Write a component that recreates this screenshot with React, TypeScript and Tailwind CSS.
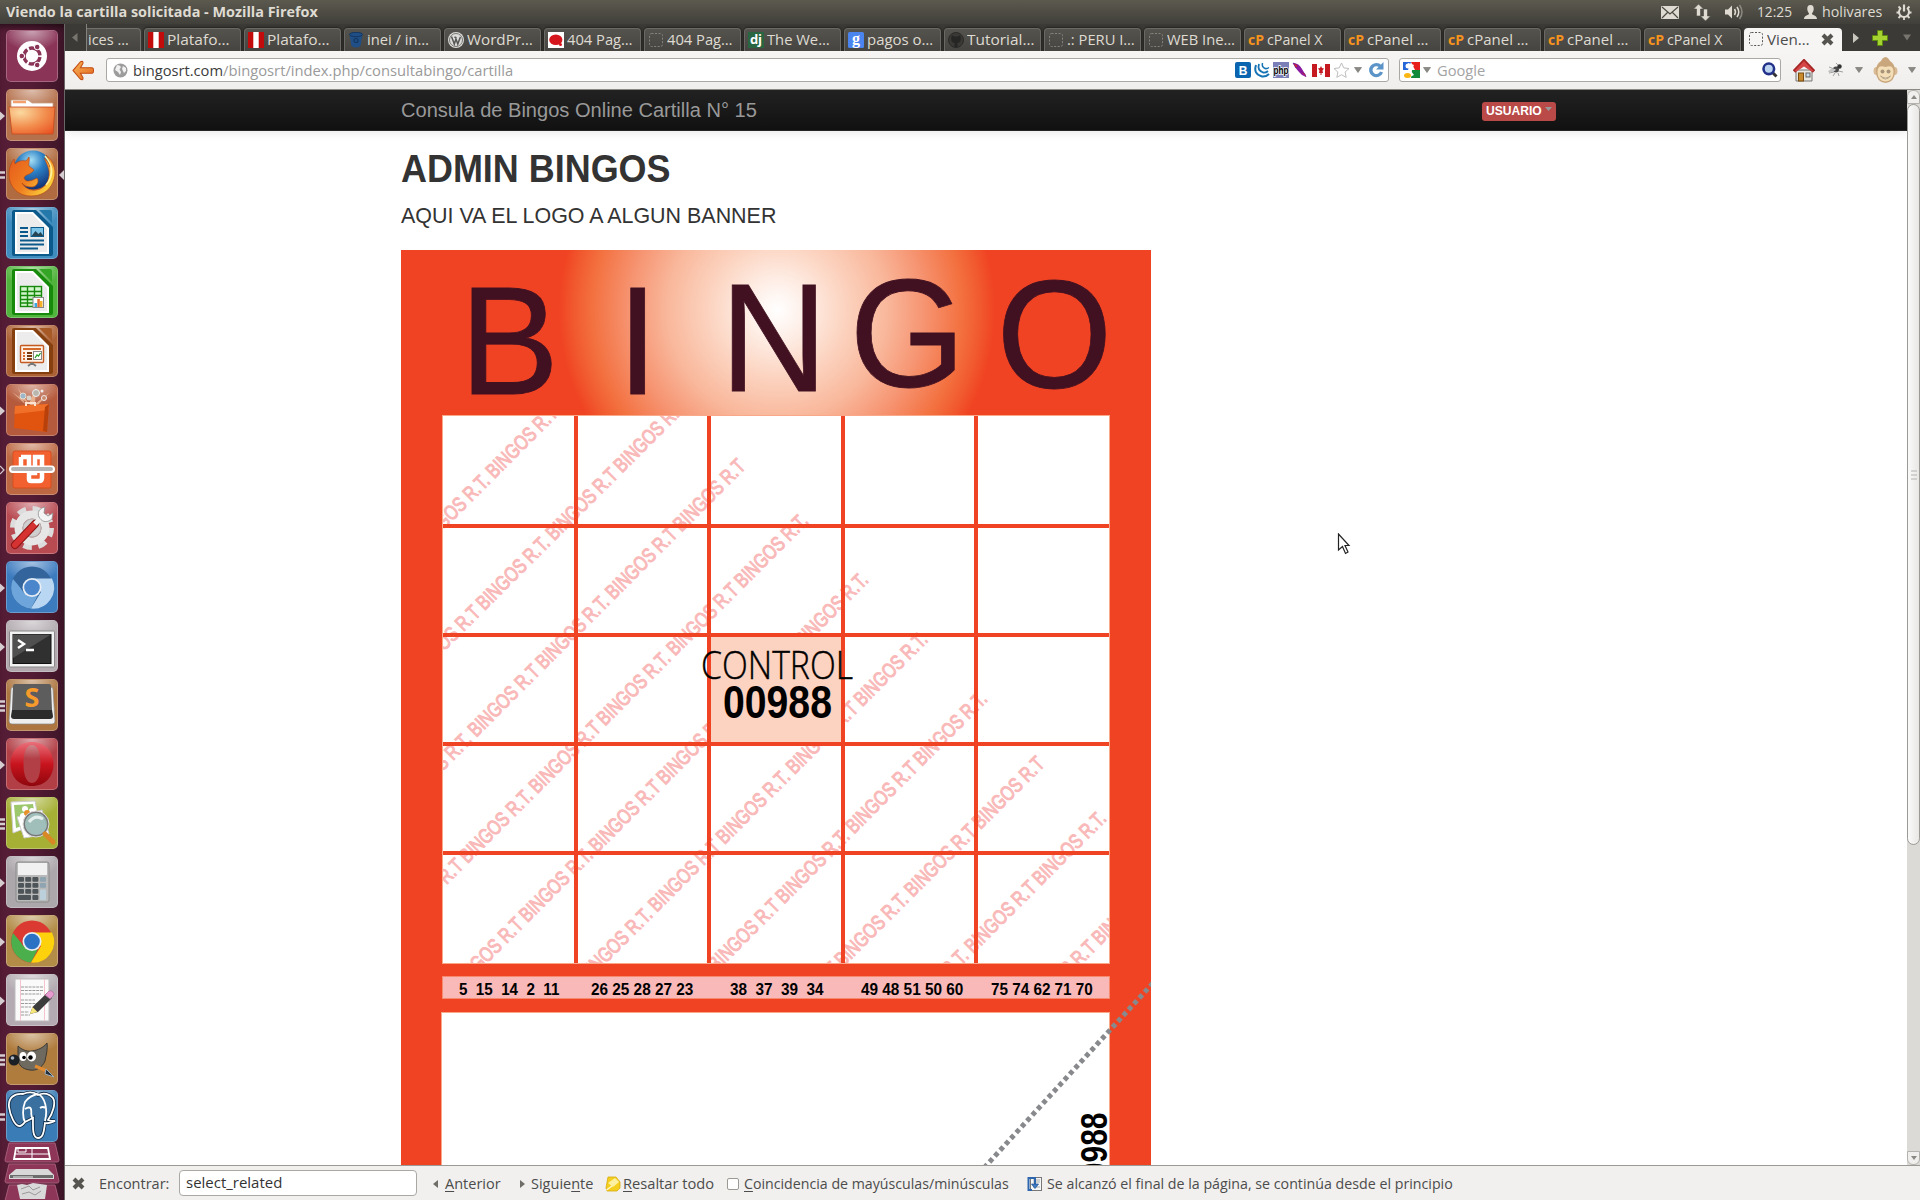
import React, { useLayoutEffect, useRef, useState } from "react";
import type { ReactNode } from "react";

/** Text squeezed or stretched horizontally to a given width. */
function Fit({ w, className = "", children }: { w: number; className?: string; children: ReactNode }) {
  const ref = useRef<HTMLSpanElement>(null);
  const [scale, setScale] = useState(1);
  useLayoutEffect(() => {
    if (ref.current && ref.current.offsetWidth > 0) setScale(w / ref.current.offsetWidth);
  }, [w]);
  return (
    <span className={`inline-block shrink-0 ${className}`} style={{ width: w }}>
      <span ref={ref} className="inline-block origin-left whitespace-pre" style={{ transform: `scaleX(${scale})` }}>
        {children}
      </span>
    </span>
  );
}

/* ---------- top panel ---------- */

function TopPanel() {
  return (
    <header className="flex h-6 shrink-0 items-center bg-linear-to-b from-[#5c5a4f] to-[#403f3a] text-[14.5px] leading-6 text-[#dfdbd2]">
      <Fit w={312} className="ml-1.5 font-bold">Viendo la cartilla solicitada - Mozilla Firefox</Fit>
      <svg className="ml-auto" width="18" height="13" viewBox="0 0 18 13">
        <rect width="18" height="13" rx="1" fill="#dfdbd2" />
        <path d="M1 1l8 7 8-7M1 12l6-6M17 12l-6-6" stroke="#4b4a43" strokeWidth="1.2" fill="none" />
      </svg>
      <svg className="ml-3.5" width="18" height="17" viewBox="0 0 18 17">
        <path d="M5.500 0L0.500 5h3v7h4V5h3zM12.500 17l5-5h-3V5h-4v7h-3z" fill="#dfdbd2" stroke="#4b4a43" strokeWidth=".6" />
      </svg>
      <svg className="ml-3.5" width="19" height="16" viewBox="0 0 19 16">
        <path d="M0 5.500h3l4-4v13l-4-4H0z" fill="#dfdbd2" />
        <path d="M9.500 5q2 3 0 6M12 3q3.500 5 0 10" stroke="#dfdbd2" strokeWidth="1.500" fill="none" />
        <path d="M14.500 1q5 7 0 14" stroke="#8b8980" strokeWidth="1.500" fill="none" />
      </svg>
      <Fit w={35} className="ml-[13px]">12:25</Fit>
      <svg className="ml-3" width="13" height="14" viewBox="0 0 13 14">
        <path d="M6.500 0C4 0 3 2 3.300 4.500 3.500 7 5 7.500 5 9c0 1-5 1-5 5h13c0-4-5-4-5-5 0-1.500 1.500-2 1.700-4.500C10 2 9 0 6.500 0z" fill="#dfdbd2" />
      </svg>
      <Fit w={60} className="ml-[5px]">holivares</Fit>
      <svg className="ml-3.5 mr-2" width="16" height="16" viewBox="0 0 16 16" fill="none" stroke="#dfdbd2">
        <path d="M5 4a5 5 0 1 0 6 0" strokeWidth="2" />
        <path d="M8 .5v7" strokeWidth="2.200" />
        <path d="M2.500 2.500l2 2M13.500 2.500l-2 2M.5 8.500H3M13 8.500h2.500M2.500 14l2-2M13.500 14l-2-2M8 13v3" strokeWidth="1.800" />
      </svg>
    </header>
  );
}

/* ---------- launcher ---------- */

function Pips({ kind }: { kind: string }) {
  return (
    <svg className="absolute -left-[7px] top-5 h-3 w-1.5" viewBox="0 0 6 12">
      {kind === "one" && <path d="M0 1.500L5 6 0 10.500z" fill="#d6cdd1" />}
      {kind === "hollow" && <path d="M0 2L4 6 0 10" fill="none" stroke="#d6cdd1" strokeWidth="1.200" />}
      {kind === "two" && <path d="M0 3.500h5M0 8.500h5" stroke="#d6cdd1" strokeWidth="2.400" />}
      {kind === "three" && <path d="M0 1.500h5M0 6h5M0 10.500h5" stroke="#d6cdd1" strokeWidth="2.400" />}
    </svg>
  );
}

function Tile({ bg, pips, active, children }: { bg: string; pips?: string; active?: boolean; children: ReactNode }) {
  return (
    <div className={`relative ml-1.5 size-13 shrink-0 rounded-[5px] border border-white/25 ${bg}`}>
      <div className="absolute inset-0 rounded-[5px] bg-[radial-gradient(ellipse_60%_40%_at_50%_0%,rgba(255,255,255,0.55),transparent)]" />
      <svg className="absolute -left-px -top-px size-13" viewBox="0 0 52 52">{children}</svg>
      {pips && <Pips kind={pips} />}
      {active && (
        <svg className="absolute -right-[7px] top-5 h-3 w-[5px]" viewBox="0 0 5 10">
          <path d="M5 0v10L0 5z" fill="#d6cdd1" />
        </svg>
      )}
    </div>
  );
}

function OfficeDoc({ dark, fold, children }: { dark: string; fold: string; children: ReactNode }) {
  return (
    <g>
      <path d="M8 3h22l17 17v27q0 2-2 2H8q-2 0-2-2V5q0-2 2-2z" fill={dark} />
      <path d="M33 3h11q2 0 2 2v11z" fill={fold} />
      <path d="M9 5h18l16 16v26H9z" fill="#fff" />
      <path d="M11 7h15l15 15v23H11z" fill="#ececec" />
      {children}
    </g>
  );
}

function ChromeMark({ a, b, c, mid }: { a: string; b: string; c: string; mid: string }) {
  return (
    <g>
      <circle cx="26" cy="26.500" r="21" fill={a} />
      <path d="M7 18A21 21 0 0 0 25 47.500L33.500 31 18 31z" fill={b} />
      <path d="M46 17.500H27L35 31 25 47.500A21 21 0 0 0 46 17.500z" fill={c} />
      <path d="M8 16l9.500 15.500L26 20z" fill={a} />
      <circle cx="26" cy="26.500" r="9.500" fill="#e8eef4" />
      <circle cx="26" cy="26.500" r="7.800" fill={mid} />
    </g>
  );
}

function Launcher() {
  return (
    <aside className="flex w-[65px] shrink-0 flex-col gap-[7px] overflow-hidden border-r border-[#6b6668] bg-linear-to-r from-[#561d36] via-[#531c34] to-[#3f1528] pt-1.5 shadow-[inset_0_6px_6px_-3px_rgba(0,0,0,0.5)]">
      <Tile bg="bg-[#8a3457]">
        <circle cx="26" cy="26" r="15" fill="#fff" />
        <circle cx="26" cy="26" r="8" fill="none" stroke="#8a3457" strokeWidth="3.400" strokeDasharray="14.700 2.050" strokeDashoffset="-1" />
        <circle cx="15.800" cy="26" r="2.800" fill="#8a3457" stroke="#fff" />
        <circle cx="31.200" cy="17" r="2.800" fill="#8a3457" stroke="#fff" />
        <circle cx="31.200" cy="35" r="2.800" fill="#8a3457" stroke="#fff" />
      </Tile>
      <Tile bg="bg-[#b5714c]" pips="one">
        <path d="M5 11h17l4 3h21v8H5z" fill="#fff" stroke="#c9a083" strokeWidth=".8" />
        <path d="M7 13h13" stroke="#f3a06d" strokeWidth="2.500" />
        <defs>
          <radialGradient id="folder" cx=".25" cy=".2" r="1"><stop offset="0" stopColor="#fbd9a0" /><stop offset=".55" stopColor="#f28e4e" /><stop offset="1" stopColor="#ea5423" /></radialGradient>
        </defs>
        <path d="M3 18h46l-2 27H6z" fill="url(#folder)" stroke="#c54a1c" strokeWidth=".8" />
      </Tile>
      <Tile bg="bg-[#b06c40]" pips="two" active>
        <defs>
          <radialGradient id="globe" cx=".45" cy=".25" r=".8"><stop offset="0" stopColor="#a8e0f5" /><stop offset=".4" stopColor="#2c7fc4" /><stop offset="1" stopColor="#10296d" /></radialGradient>
          <linearGradient id="fox" x1="0" y1="0" x2="1" y2=".6"><stop offset="0" stopColor="#e5591d" /><stop offset=".55" stopColor="#ef7d1f" /><stop offset="1" stopColor="#fbd13c" /></linearGradient>
        </defs>
        <circle cx="27" cy="22" r="19.500" fill="url(#globe)" />
        <path d="M40 7c9 7 11 18 7 27-4 10-13 14-22 14C12 48 3 39 3 26 3 19 6 14 8 11l1 5c3-3 7-4 11-3l3-4c1 4-1 7 0 9l5 4c-3 5-9 4-10 8 2 5 7 3 13 0 3 4-1 9-5 9-5 0-8-1-10-4 3 5 8 8 14 7 9-1 14-9 13-19-1-5-3-9-5-13 3 2 5 5 6 9 0-5-2-9-4-12z" fill="url(#fox)" stroke="#b64213" strokeWidth=".6" />
        <path d="M39 8c6 7 9 16 4 25M45 18c1 8 0 14-5 19" fill="none" stroke="#fff09a" strokeWidth="1.600" />
      </Tile>
      <Tile bg="bg-[#3f8cbf]">
        <OfficeDoc dark="#0c5a8c" fold="#2478aa">
          <path d="M14 21h8M14 25h8M14 29h8M14 33.500h24M14 37.500h24M14 41.500h18" stroke="#0c5a8c" strokeWidth="2" />
          <rect x="25" y="20.500" width="12.500" height="9" fill="#7cc4e8" stroke="#0c5a8c" />
          <path d="M25.500 29l4-5 3 3 2-2 3 4z" fill="#274452" />
        </OfficeDoc>
      </Tile>
      <Tile bg="bg-[#51b43c]">
        <OfficeDoc dark="#178a0c" fold="#35a526">
          <rect x="14.500" y="20.500" width="21" height="20" fill="#d2f5cb" stroke="#178a0c" strokeWidth="1.400" />
          <path d="M14 25.500h22M14 29.500h22M14 33.500h22M14 37h22M21.500 20v21M28.500 20v21" stroke="#178a0c" strokeWidth="1.400" />
          <rect x="27" y="31.500" width="10.500" height="10" fill="#fff" stroke="#888" />
          <path d="M28.500 37h2.500v4h-2.500z" fill="#3aa7e0" /><path d="M31.300 33h2.500v8h-2.500z" fill="#e8692a" /><path d="M34 35h2.500v6H34z" fill="#f4b32a" />
        </OfficeDoc>
      </Tile>
      <Tile bg="bg-[#ad6236]">
        <OfficeDoc dark="#86400f" fold="#a85a26">
          <rect x="14.500" y="20.500" width="23" height="17" rx="1" fill="#fff3e8" stroke="#c45a20" strokeWidth="1.400" />
          <path d="M17 24h18" stroke="#d66a2a" strokeWidth="2" />
          <path d="M17 28h2M17 31h2M17 34h2" stroke="#d66a2a" strokeWidth="1.800" />
          <path d="M21 28h5M21 31h5M21 34h5" stroke="#7c3a10" strokeWidth="1.800" />
          <rect x="27.500" y="26.500" width="8" height="8" fill="#fff" stroke="#888" /><path d="M29 33l2-3 1.500 1 2-3" stroke="#2ba32b" fill="none" strokeWidth="1.300" />
          <path d="M22 41l4-3 4 3M26 38v2" stroke="#777" strokeWidth="1.800" fill="none" />
        </OfficeDoc>
      </Tile>
      <Tile bg="bg-[#b55a3c]" pips="one">
        <path d="M26 22L6 8l13 12L12 4l11 16L30 3l-1 17L44 8 31 22z" fill="#f8c9a2" opacity=".7" />
        <circle cx="17" cy="12" r="3" fill="#9cb7c8" stroke="#e4dcd4" /><circle cx="30" cy="9" r="3.500" fill="#b9b6ae" stroke="#eee" /><circle cx="23" cy="14" r="2.500" fill="#d9d2c8" /><circle cx="38" cy="14" r="2.500" fill="#c98b6c" stroke="#eee" /><circle cx="36" cy="7" r="1.500" fill="#eee" />
        <path d="M9 22l34-2-2 28-33-4z" fill="#e0540f" /><path d="M9 22l34-2-.3 6L8.500 30z" fill="#f0702a" /><path d="M41 48l2-28-4 3-2 24z" fill="#b8400a" />
        <path d="M20 22v-3h9v3" stroke="#fbe3cf" strokeWidth="2" fill="none" />
      </Tile>
      <Tile bg="bg-[#bd6842]" pips="hollow">
        <rect x="7" y="8" width="38" height="37" rx="2" fill="#f2602f" stroke="#d94c1e" />
        <path d="M15 14h8v22q0 2 2 2h8q3 0 3-3V14h-7v16h-4" fill="none" stroke="#fff" strokeWidth="4.500" />
        <path d="M15 14v16" stroke="#fff" strokeWidth="4.500" />
        <rect x="3" y="22.500" width="46" height="7.500" rx="3.700" fill="#fff" /><rect x="5" y="24" width="42" height="4" rx="2" fill="#b5b5b5" />
      </Tile>
      <Tile bg="bg-[#b84a52]">
        <circle cx="26" cy="26" r="18" fill="none" stroke="#dcdcdc" strokeWidth="8" strokeDasharray="8 6.140" />
        <circle cx="26" cy="26" r="13.500" fill="none" stroke="#e6e6e6" strokeWidth="8" /><circle cx="26" cy="26" r="9" fill="#cfcfcf" stroke="#b5b5b5" />
        <path d="M9 43L29 22" stroke="#8f1414" strokeWidth="8" strokeLinecap="round" /><path d="M9 43L28 23" stroke="#d63232" strokeWidth="6" strokeLinecap="round" />
        <path d="M29 22l7-7" stroke="#eee" strokeWidth="5" /><path d="M39 5c-6 1-8 6-6 10s7 7 13 2l1-6-5 3-4-3z" fill="#f4f4f4" stroke="#8d8d8d" strokeWidth=".8" />
      </Tile>
      <Tile bg="bg-[#3d7bbf]" pips="one"><ChromeMark a="#33659c" b="#6ea6dc" c="#b9d6f2" mid="#4b86cc" /></Tile>
      <Tile bg="bg-[#b1a9ae]" pips="one">
        <rect x="3.500" y="11" width="45" height="36" rx="1" fill="#f2f2f2" stroke="#888" /><rect x="7" y="14.500" width="38" height="29" fill="#303030" stroke="#111" />
        <path d="M7 14.500h38L7 38z" fill="#505050" />
        <path d="M12 20l6 4-6 4M20 30h8" stroke="#fff" strokeWidth="2.400" fill="none" />
      </Tile>
      <Tile bg="bg-[#ad7640]" pips="three">
        <path d="M5 10q0-2 3-2h36q3 0 3 2l2 32q0 3-3 3H6q-3 0-3-3z" fill="#eee" stroke="#888" strokeWidth=".7" />
        <path d="M9 5h34q2 0 2 2l1 24H6L7 7q0-2 2-2z" fill="#5d5d5d" /><path d="M6 31h40l1 6q0 3-3 3H8q-3 0-3-3z" fill="#2b2b2b" />
        <text x="26" y="28" textAnchor="middle" fontSize="27" fontWeight="700" fill="#f79a2c" fontFamily="Open Sans, sans-serif">S</text>
      </Tile>
      <Tile bg="bg-[#b23e46]" pips="one">
        <defs><linearGradient id="opera" x1="0" y1="0" x2="0" y2="1"><stop offset="0" stopColor="#e9707a" /><stop offset=".5" stopColor="#c8141e" /><stop offset="1" stopColor="#8f060c" /></linearGradient></defs>
        <path fillRule="evenodd" d="M26 4C13 4 4.500 13 4.500 26S13 48 26 48s21.500-9 21.500-22S39 4 26 4zm0 3c6 0 8.500 8 8.500 18.500S32 45 26 45s-8.500-9-8.500-19.500S20 7 26 7z" fill="url(#opera)" />
      </Tile>
      <Tile bg="bg-[#a5b034]" pips="three">
        <path d="M5 5l24-1 4 22-26 10z" fill="#fff" stroke="#ccc" /><path d="M8 8l19-1 3 17-20 7z" fill="#9cc76c" /><path d="M11 20l25-7 7 24-25 4z" fill="#fff" stroke="#ccc" />
        <g fill="#fff"><circle cx="19" cy="12" r="3" /><circle cx="26" cy="14" r="3" /><circle cx="17" cy="19" r="3" /><circle cx="24" cy="20" r="3" /></g><circle cx="21" cy="16" r="3" fill="#e8922a" />
        <circle cx="30" cy="27" r="12" fill="#8fb3ae" fillOpacity=".85" stroke="#777" strokeWidth="2" /><circle cx="30" cy="27" r="13" fill="none" stroke="#ddd" />
        <path d="M23 25q6-8 14-3" stroke="#e4efed" strokeWidth="3" fill="none" /><path d="M39 37l8 8" stroke="#d88926" strokeWidth="5" strokeLinecap="round" />
      </Tile>
      <Tile bg="bg-[#aca7ab]" pips="one">
        <rect x="10" y="6" width="33" height="40" rx="2" fill="#b9b9b9" stroke="#8b8b8b" /><rect x="12" y="7" width="29" height="12" fill="#f1f1f1" />
        <g fill="#4e5458">{[21, 27, 33].map((y) => [12, 19.2, 26.400].map((x) => <rect key={`${x}-${y}`} x={x} y={y} width="6" height="4.800" rx="1" />))}<rect x="12" y="39" width="13" height="5" rx="1" /><rect x="26.400" y="39" width="6" height="5" rx="1" /></g>
        <g fill="#8ea4b1"><rect x="34" y="21" width="6" height="4.800" rx="1" /><rect x="34" y="27" width="6" height="4.800" rx="1" /><rect x="34" y="33.500" width="6" height="10.500" rx="1" fill="#bcd0dc" /></g>
      </Tile>
      <Tile bg="bg-[#b38c48]" pips="one"><ChromeMark a="#db3a33" b="#4bb04c" c="#fdd20d" mid="#2b72c4" /></Tile>
      <Tile bg="bg-[#b3abb1]" pips="one">
        <rect x="9" y="5" width="34" height="42" fill="#fafafa" stroke="#bbb" /><path d="M14.500 5v42M38.500 5v42" stroke="#f2b8c4" strokeWidth=".8" />
        <path d="M15 13h22M15 16.500h22M15 20h20M15 26h14M15 29.500h16M15 33h10M15 38h8M15 41h9" stroke="#9a9a9a" strokeDasharray="3 .8" />
        <path d="M24 40l2.500-7L41 19l5 5-14 14z" fill="#3c3c3c" /><path d="M24 40l2.500-7 5 5z" fill="#f6e57a" /><path d="M39 21l4-4q2-1 4 1t0 4l-3 3z" fill="#e99ad0" stroke="#9c6b8e" strokeWidth=".6" />
      </Tile>
      <Tile bg="bg-[#b07c3e]" pips="three">
        <path d="M12 13c3 3 8 6 14 5 6-1 11-3 15-8 1 5-1 13-2 18-3 7-9 10-15 9-8-1-12-5-12-12z" fill="#6f6a60" stroke="#3c3933" />
        <circle cx="8" cy="27" r="5.500" fill="#1c1f24" /><circle cx="6.500" cy="25" r="1.800" fill="#aab5c2" />
        <ellipse cx="17" cy="23.500" rx="3.500" ry="4.500" fill="#fff" /><ellipse cx="25.500" cy="23.500" rx="4.500" ry="5" fill="#fff" /><circle cx="18" cy="24.500" r="1.800" /><circle cx="24.500" cy="24.500" r="2.200" />
        <path d="M29 33l12 5" stroke="#e08a32" strokeWidth="3" /><path d="M40 36l8 8-9-3z" fill="#23303c" stroke="#9ab" />
      </Tile>
      <div className="-mt-0.5 flex flex-col">
        <Tile bg="bg-[#3a7cb5]" pips="two">
          <path d="M17 4C8 3 2 8 3 17c1 8 6 20 11 19 2 0 4-3 5-4l8-4c0 8-1 20 5 20s6-9 7-15c4 1 8-1 10-2-3 0-5 0-7-1 5-7 8-17 5-22-3-4-9-6-15-3-4-3-10-3-15-1z" fill="#3970a0" stroke="#102c48" strokeWidth="3.500" />
          <path d="M17 4C8 3 2 8 3 17c1 8 6 20 11 19 2 0 4-3 5-4l8-4c0 8-1 20 5 20s6-9 7-15c4 1 8-1 10-2-3 0-5 0-7-1 5-7 8-17 5-22-3-4-9-6-15-3-4-3-10-3-15-1zM19 32c-3-5-2-15 0-20 3-4 6-7 13-8M32 4c7 3 10 15 7 27M19 19q5-3 6 0c1 5-1 7 2 10M34 18q3-2 5 0" fill="none" stroke="#fff" strokeWidth="1.800" />
        </Tile>
        <svg className="ml-1" width="56" height="59" viewBox="0 0 56 59">
          <path d="M5 1h46l4 17q0 2-2 2H3q-2 0-2-2z" fill="#8d3658" stroke="#a65b78" /><path d="M12 6h32l2 11H10z" fill="#8d3658" stroke="#fff" strokeWidth="1.800" /><path d="M28 6v11M11 12h34M14 6h8v4h-8z" stroke="#fff" fill="none" />
          <path d="M5 22h46l4 17q0 2-2 2H3q-2 0-2-2z" fill="#8d3658" stroke="#a65b78" /><path d="M12 27h32l6 6v4H5v-4z" fill="#d8d8d8" /><path d="M6 33h43v3H6z" fill="#6b6b6b" /><path d="M9 35h20" stroke="#eee" />
          <path d="M5 43h46l4 16H1z" fill="#8d3658" stroke="#a65b78" /><path d="M13 43l5-1 5 1 6-2 7 1 7 1-2 14H16z" fill="#d9d9d9" /><path d="M17 47l8-3 4 4 7-3M18 52l7-2 6 3 6-4" stroke="#999" fill="none" />
        </svg>
      </div>
    </aside>
  );
}

/* ---------- tab strip ---------- */

type IconKind = "peru" | "bucket" | "wp" | "claro" | "none" | "dj" | "google" | "github" | "cp";

function TabIcon({ kind, light }: { kind: IconKind; light?: boolean }) {
  return (
    <svg className="mb-px size-4 shrink-0" viewBox="0 0 16 16">
      {kind === "peru" && <><rect width="16" height="16" fill="#c20c0c" /><rect x="5.300" width="5.400" height="16" fill="#fff" /></>}
      {kind === "bucket" && <><path d="M1.500 2.500L3.500 14q4.500 3 9 0l2-11.500z" fill="#1f4f86" /><ellipse cx="8" cy="2.500" rx="6.500" ry="2.200" fill="#1f4f86" stroke="#14365e" /><circle cx="8" cy="8.500" r="2" fill="none" stroke="#14365e" strokeWidth="1.200" /></>}
      {kind === "wp" && <><circle cx="8" cy="8" r="8" fill="#dcdcd8" /><circle cx="8" cy="8" r="6.500" fill="none" stroke="#777" /><path d="M3.500 4.500L6.300 12l1.700-5 1.800 5 2.600-7M6.500 5l2 1" stroke="#555" strokeWidth="1.500" fill="none" /></>}
      {kind === "claro" && <><rect width="16" height="16" fill="#fff" /><ellipse cx="7.800" cy="7.800" rx="6.600" ry="5.300" fill="#d5161c" /><circle cx="12.500" cy="12.500" r="1.500" fill="#d5161c" /></>}
      {kind === "none" && <rect x="1.500" y="1.500" width="13" height="13" rx="2" fill="none" stroke={light ? "#555" : "#85837c"} strokeDasharray="2 1.500" />}
      {kind === "dj" && <><rect width="16" height="16" fill="#2a6542" /><text x="8" y="12" fontSize="13" fontWeight="700" fill="#fff" textAnchor="middle" fontFamily="Open Sans, sans-serif">dj</text></>}
      {kind === "google" && <><rect width="16" height="16" rx="1.500" fill="#4a84ee" /><text x="8" y="12" fontSize="16" fontWeight="700" fill="#fff" textAnchor="middle" fontFamily="Liberation Serif, serif">g</text></>}
      {kind === "github" && <><circle cx="8" cy="8" r="7.500" fill="#3a3936" stroke="#2a2a28" /><path d="M4 3l2 1.500h4L12 3q1.500 3 .5 6-1 2-3 2v4h-3v-4q-2 0-3-2-1-3 .5-6z" fill="#262624" /></>}
      {kind === "cp" && <text x="8" y="13" fontSize="14" fontWeight="700" fill="#f7931d" textAnchor="middle" textLength="16" lengthAdjust="spacingAndGlyphs" fontFamily="Open Sans, sans-serif">cP</text>}
    </svg>
  );
}

const TABS: { icon: IconKind; label: string; w: number }[] = [
  { icon: "peru", label: "Platafo…", w: 63 },
  { icon: "peru", label: "Platafo…", w: 63 },
  { icon: "bucket", label: "inei / in…", w: 62 },
  { icon: "wp", label: "WordPr…", w: 66 },
  { icon: "claro", label: "404 Pag…", w: 66 },
  { icon: "none", label: "404 Pag…", w: 66 },
  { icon: "dj", label: "The We…", w: 63 },
  { icon: "google", label: "pagos o…", w: 66 },
  { icon: "github", label: "Tutorial…", w: 67 },
  { icon: "none", label: ".: PERU I…", w: 68 },
  { icon: "none", label: "WEB Ine…", w: 68 },
  { icon: "cp", label: "cPanel X", w: 56 },
  { icon: "cp", label: "cPanel …", w: 61 },
  { icon: "cp", label: "cPanel …", w: 61 },
  { icon: "cp", label: "cPanel …", w: 61 },
  { icon: "cp", label: "cPanel X", w: 56 },
];

function TabStrip() {
  return (
    <div className="flex h-[27px] items-end bg-[#3b3a36] text-[14.5px] leading-[22px] text-[#dfdbd2]">
      <div className="flex h-full w-[22px] items-center border-r border-[#85837c] pl-1.5">
        <svg width="7" height="9" viewBox="0 0 7 9"><path d="M6.500 0v9L1 4.500z" fill="#77756e" /></svg>
      </div>
      <div className="mr-[3px] h-[23px] w-[54px] rounded-tr-[4px] border-r border-t border-[#73716b] bg-linear-to-b from-[#55534e] to-[#454440] pl-px">
        <Fit w={41}>ices …</Fit>
      </div>
      {TABS.map((t, i) => (
        <div key={i} className="mr-[3px] flex h-[23px] w-[97px] shrink-0 items-center rounded-t-[4px] border border-b-0 border-[#6b6963] bg-linear-to-b from-[#55534e] to-[#454440] pl-[3px] shadow-[0_0_2px_1px_rgba(25,25,22,0.7)]">
          <TabIcon kind={t.icon} />
          <Fit w={t.w} className="ml-[3px]">{t.label}</Fit>
        </div>
      ))}
      <div className="flex h-[23px] w-[98px] shrink-0 items-center rounded-t-[4px] bg-[#f6f5f4] pl-1 text-[#4c4c4c]">
        <TabIcon kind="none" light />
        <Fit w={43} className="ml-[3px]">Vien…</Fit>
        <CloseGlyph className="ml-[11px]" />
      </div>
      <div className="flex h-full items-center gap-3 pl-[11px]">
        <svg width="7" height="10" viewBox="0 0 7 10"><path d="M0 0v10l6-5z" fill="#c9c6be" /></svg>
        <svg width="16" height="16" viewBox="0 0 16 16"><path d="M5.500 .5h5v5h5v5h-5v5h-5v-5h-5v-5h5z" fill="#a5d32f" stroke="#5d8a0e" /></svg>
        <svg className="ml-[3px]" width="8" height="7" viewBox="0 0 8 7"><path d="M0 .5h8L4 6.500z" fill="#77756e" /></svg>
      </div>
    </div>
  );
}

function CloseGlyph({ className = "" }: { className?: string }) {
  return (
    <svg className={`shrink-0 ${className}`} width="13" height="13" viewBox="0 0 13 13">
      <path d="M2 2l9 9M11 2l-9 9" stroke="#55544f" strokeWidth="4" />
    </svg>
  );
}

function Caret({ className = "" }: { className?: string }) {
  return <svg className={`shrink-0 ${className}`} width="8" height="6" viewBox="0 0 8 6"><path d="M.5.500h7L4 5.500z" fill="#8b8984" stroke="#6e6d68" strokeWidth=".6" /></svg>;
}

/* ---------- location bar ---------- */

function NavBar() {
  return (
    <div className="flex h-[39px] items-center border-b border-[#8a8984] bg-linear-to-b from-[#f6f5f4] to-[#efeeec] text-[15px] leading-6">
      <svg className="ml-[7px] shrink-0" width="22" height="21" viewBox="0 0 22 19" preserveAspectRatio="none">
        <defs><linearGradient id="back" x1="0" y1="0" x2="1" y2="1"><stop offset="0" stopColor="#f9b45a" /><stop offset="1" stopColor="#e2641c" /></linearGradient></defs>
        <path d="M1 9.500L8.500 1.500q3-1 2.500 1.500L8.500 7H20q1.500 0 1.500 2.500T20 12H8.500l2.500 4q.5 2.500-2.500 1.500z" fill="url(#back)" stroke="#c44c12" />
      </svg>
      <div className="ml-3 flex h-6 w-[1283px] shrink-0 items-center rounded-[3px] border border-[#a9a8a3] bg-white">
        <svg className="ml-1.5 shrink-0" width="15" height="15" viewBox="0 0 15 15">
          <circle cx="7.500" cy="7.500" r="7" fill="#9c9c9c" /><path d="M4 2q3 0 4 2L6.500 6.500 8 9l-1 3-2-3-3-2zM10 3l3 2v3l-2 2-2-4z" fill="#f1f1f1" />
        </svg>
        <Fit w={90} className="ml-[5px] text-[#3c3c3c]">bingosrt.com</Fit>
        <Fit w={290} className="text-[#9a9a9a]">/bingosrt/index.php/consultabingo/cartilla</Fit>
        <div className="ml-auto flex items-center">
          <svg width="16" height="16" viewBox="0 0 16 16"><rect width="16" height="16" rx="2" fill="#0b64b0" /><text x="8" y="12.500" fontSize="12" fontWeight="700" fill="#fff" textAnchor="middle" fontFamily="Liberation Sans, sans-serif">B</text></svg>
          <svg className="ml-[3px]" width="16" height="16" viewBox="0 0 16 16" fill="none" stroke="#1673b4"><path d="M2 3Q-1 12 8 14.500q4 .5 7-2.500" strokeWidth="2" /><path d="M5 2q-2 6 4 8.500 3 .5 5-1.500" strokeWidth="1.800" /><path d="M8.500 1q-1 4 2.500 5.500 2 .5 4-1" strokeWidth="1.500" /></svg>
          <svg className="ml-[3px]" width="16" height="16" viewBox="0 0 16 16"><rect width="16" height="16" fill="#7b7fb8" /><text x="8" y="11.500" fontSize="10" fontWeight="700" textAnchor="middle" textLength="15" lengthAdjust="spacingAndGlyphs" fill="#000" stroke="#fff" strokeWidth="1.500" paintOrder="stroke" fontFamily="Liberation Sans, sans-serif">php</text></svg>
          <svg className="ml-[3px]" width="16" height="16" viewBox="0 0 16 16"><path d="M1 1q6 0 9 6l3 5 1 3q-4-1-7-5Q3 6 1 1z" fill="#8b1aa0" /><path d="M1 1q3 1 5 3L4 6zM9 9l4 3 1 3" fill="#e0222c" stroke="#5b1b9c" strokeWidth=".6" /></svg>
          <svg className="ml-1" width="18" height="13" viewBox="0 0 18 13"><rect width="18" height="13" fill="#c41a20" /><rect x="5" width="8" height="13" fill="#fff" /><path d="M9 2l1 2 2 .5-1.500 2L11 9H9.500v2h-1V9H7l.5-2.500L6 4.500 8 4z" fill="#c41a20" /></svg>
          <svg className="ml-[3px]" width="17" height="16" viewBox="0 0 17 16"><path d="M8.500 1l2.300 4.900 5.200.6-3.900 3.600 1.100 5.300-4.700-2.700-4.700 2.700 1.100-5.300L1 6.500l5.200-.6z" fill="#fff" stroke="#bdbdbd" /></svg>
          <Caret className="ml-1" />
          <svg className="ml-1.5 mr-1" width="16" height="16" viewBox="0 0 16 16"><path d="M12.500 4.500A5.500 5.500 0 1 0 13.500 10" fill="none" stroke="#5c94c8" strokeWidth="3.400" /><path d="M15.500 0v7.500H8z" fill="#5c94c8" /></svg>
        </div>
      </div>
      <div className="ml-2.5 flex h-6 w-[382px] shrink-0 items-center rounded-[3px] border border-[#a9a8a3] bg-white">
        <svg className="ml-[3px]" width="17" height="16" viewBox="0 0 17 16"><path d="M0 0h8L5 8H0z" fill="#2465d8" /><path d="M8 0h9v8h-5z" fill="#e8201b" /><path d="M0 8h7l3 8H0z" fill="#fff" /><path d="M9 8h8v8H8z" fill="#128a3b" /><circle cx="5" cy="4" r="2.500" fill="#fff" /><path d="M5 1l6 2-3 6 3 4-4 2" fill="#fff" /><ellipse cx="4.500" cy="13.500" rx="3.500" ry="2.500" fill="#fbb612" /></svg>
        <Caret className="ml-[3px]" />
        <Fit w={48} className="ml-1.5 text-[#a3a3a3]">Google</Fit>
        <svg className="ml-auto mr-0.5" width="16" height="16" viewBox="0 0 16 16"><path d="M10.500 10.500l4 4" stroke="#333" strokeWidth="3" /><circle cx="6.800" cy="6.800" r="5.300" fill="#bcd4f0" stroke="#22318a" strokeWidth="2.600" /></svg>
      </div>
      <svg className="ml-3 shrink-0" width="22" height="23" viewBox="0 0 22 23"><path d="M3 11h16v11H3z" fill="#e8e6e0" stroke="#777" /><path d="M1 12.500L11 2l10 10.500" fill="none" stroke="#a52525" strokeWidth="3.500" /><path d="M1.500 12L11 2l9.500 10-2 .5-7.500-5-7.500 5z" fill="#d64545" /><rect x="5.500" y="14" width="5" height="8" fill="#c88a2b" stroke="#7a4c10" /><rect x="13" y="14" width="4" height="4" fill="#c9dcec" stroke="#666" /></svg>
      <svg className="ml-3 shrink-0" width="18" height="16" viewBox="0 0 18 16"><ellipse cx="9" cy="7.500" rx="3" ry="3" fill="#4a4a4a" /><circle cx="12.500" cy="4.500" r="2.200" fill="#333" /><path d="M7 7L2 5M7 10l-5 1M8 11l-2 3M11 9l5 1M11 11l1 3M11 3L9 1" stroke="#8a8a8a" strokeWidth=".8" /><path d="M8 7Q3 6 1 10q4 1.500 8-2z" fill="#c4c4c4" /></svg>
      <Caret className="ml-2.5" />
      <svg className="ml-2.5 shrink-0" width="25" height="28" viewBox="0 0 25 28"><ellipse cx="3.500" cy="15" rx="3" ry="4" fill="#d9ba94" /><ellipse cx="21.500" cy="15" rx="3" ry="4" fill="#d9ba94" /><path d="M12 1q3 0 5 4 5 3 5 10 0 11-9.500 12Q3 26 3 15 3 8 8 5q1-3 4-4z" fill="#c9a67c" /><path d="M12.500 11q8-3 8 5 0 9-8 9.500-8-.5-8-9.500 0-8 8-5z" fill="#f3deb8" /><circle cx="9.500" cy="15.500" r="2" fill="#a89478" /><circle cx="15.500" cy="15.500" r="2" fill="#a89478" /><path d="M7.500 20q5 4 10 0-5 6-10 0z" fill="#fff" stroke="#a89478" strokeWidth=".8" /></svg>
      <Caret className="ml-2.5" />
    </div>
  );
}

/* ---------- bingo card ---------- */

const LONG = "BINGOS R.T. BINGOS R.T ";
const DOT_END = LONG.repeat(3) + "BINGOS R.T.";
const PLAIN_END = LONG.repeat(3) + "BINGOS R.T";
const FIRST_LINE = "BINGOS R.T. BINGOS R.T. BINGOS R.T.";

/* End point of every diagonal line, relative to the grid's corner. */
const WATERMARKS = [
  { x: 119, y: -2.500, text: FIRST_LINE },
  { x: 245, y: -6.500, text: PLAIN_END },
  { x: 304.500, y: 52.500, text: PLAIN_END },
  { x: 367.500, y: 107, text: DOT_END },
  { x: 427.500, y: 166, text: DOT_END },
  { x: 487, y: 225.500, text: DOT_END },
  { x: 546.500, y: 285, text: DOT_END },
  { x: 603.500, y: 350, text: PLAIN_END },
  { x: 665.500, y: 404.500, text: DOT_END },
  { x: 725, y: 464, text: DOT_END },
];

const NUMBERS = [
  { text: "5  15  14  2  11", w: 100.500, cls: "ml-4" },
  { text: "26 25 28 27 23", w: 102.500, cls: "ml-[31px]" },
  { text: "38  37  39  34", w: 93.500, cls: "ml-[37px]" },
  { text: "49 48 51 50 60", w: 102.500, cls: "ml-[37px]" },
  { text: "75 74 62 71 70", w: 102, cls: "ml-[28px]" },
];

const LETTERS = [
  { c: "B", x: 58.800, y: 144 },
  { c: "I", x: 215.900, y: 144 },
  { c: "N", x: 319.100, y: 141 },
  { c: "G", x: 448.500, y: 136.500 },
  { c: "O", x: 595.500, y: 137.500 },
];

function BingoCard() {
  return (
    <div className="relative flex h-[915px] w-[750px] flex-col overflow-hidden bg-[#f04323]">
      <div className="h-[165px] shrink-0 bg-[radial-gradient(circle_218px_at_376px_60px,#ffffff_0%,#fef0e9_12%,#fcd5c2_30%,#f9b89c_50%,#f69370_68%,#f3703f_85%,#f15a2f_93%,#f04323_100%)]">
        <svg width="750" height="165" viewBox="0 0 750 165" fill="#411121" stroke="#411121" strokeWidth=".8" fontFamily="Liberation Sans, Arial, sans-serif" fontSize="154">
          {LETTERS.map((l) => (
            <text key={l.c} transform={`translate(${l.x} ${l.y}) scale(.967 1)`}>{l.c}</text>
          ))}
        </svg>
      </div>
      <div className="relative ml-[41px] h-[549px] w-[668px] shrink-0 overflow-hidden border border-[#f9a98a] bg-white">
        <svg className="absolute -left-px -top-px" width="668" height="549" viewBox="0 0 668 549" fill="#f9b9b9" stroke="#f9b9b9" strokeWidth="1.100" fontFamily="Liberation Sans, Arial, sans-serif" fontSize="20.500">
          {WATERMARKS.map((m) => (
            <text key={m.x} textAnchor="end" transform={`translate(${m.x} ${m.y}) rotate(-45) scale(.775 1)`}>{m.text}</text>
          ))}
        </svg>
        <div className="relative grid h-full grid-cols-[131px_129px_130px_129px_131px] grid-rows-[108px_105px_105px_105px_108px] gap-1">
          {Array.from({ length: 25 }, (_, i) => (
            <div key={i} className={i === 12 ? "bg-[#fcd2c0] outline-4 outline-[#f04323]" : "outline-4 outline-[#f04323]"} />
          ))}
        </div>
        <div className="absolute left-[258px] top-[230px] flex w-[152px] flex-col items-center text-black">
          <Fit w={152} className="h-9 font-['Open_Sans'] text-[38px] font-light leading-9 [-webkit-text-stroke:0.4px_black]">CONTROL</Fit>
          <Fit w={109} className="h-10 font-['Liberation_Sans'] text-[46px] font-bold leading-10">00988</Fit>
        </div>
      </div>
      <div className="ml-[41px] mt-3 flex h-[23px] w-[668px] shrink-0 items-center border border-[#f58a6e] bg-[#f9b9b9] font-['Liberation_Sans'] text-[16px] font-bold leading-5 text-black">
        {NUMBERS.map((n) => (
          <Fit key={n.text} w={n.w} className={`${n.cls} pt-1`}>{n.text}</Fit>
        ))}
      </div>
      <div className="ml-[40px] mt-[13px] w-[669px] grow border-x border-t border-[#f9a98a] bg-white" />
      <svg className="absolute left-0 top-[720px]" width="750" height="195" viewBox="0 0 750 195">
        <path d="M752 13L572 210" stroke="#88898c" strokeWidth="5" strokeDasharray="4.500 3.430" />
        <text transform="translate(705.500 226) rotate(-90) scale(.835 1)" fontFamily="Liberation Sans, Arial, sans-serif" fontWeight="700" fontSize="36">00988</text>
      </svg>
    </div>
  );
}

function Page() {
  return (
    <div className="flex min-h-0 flex-1">
      <main className="relative w-[1842px] shrink-0 overflow-hidden bg-white font-['Liberation_Sans'] text-[#333]">
        <div className="h-[41px] border-b border-[#252525] bg-linear-to-b from-[#222] to-[#111] shadow-[0_1px_10px_rgba(0,0,0,0.1)]">
          <div className="mx-auto flex h-10 w-[1170px] items-center">
            <Fit w={356} className="text-[20px] leading-5 text-[#999]">Consula de Bingos Online Cartilla N° 15</Fit>
            <div className="ml-[725px] mt-0.5 flex h-[19px] w-[74px] items-center rounded-[3px] bg-[#b94a48] pl-1 text-[12.5px] font-bold text-white">
              <Fit w={56}>USUARIO</Fit>
              <svg className="mb-1 ml-[3px]" width="7" height="4" viewBox="0 0 7 4"><path d="M0 0h7L3.500 4z" fill="#999" /></svg>
            </div>
          </div>
        </div>
        <div className="mx-auto w-[1170px]">
          <h1 className="mt-[18px] text-[39px] font-bold leading-10 text-[#333]"><Fit w={270}>ADMIN BINGOS</Fit></h1>
          <p className="mt-3 text-[21.5px] leading-[30px]"><Fit w={375}>AQUI VA EL LOGO A ALGUN BANNER</Fit></p>
          <div className="mt-[19px]"><BingoCard /></div>
        </div>
        <svg className="absolute left-[1272px] top-[443px]" width="14" height="22" viewBox="0 0 14 22">
          <path d="M1.500 1v16l4-3.500 3 7 2.500-1.500-3-6.500H12z" fill="#fff" stroke="#222" strokeWidth="1.200" />
        </svg>
      </main>
      <div className="flex flex-1 flex-col bg-[#dcdad7]">
        <div className="flex h-[14px] items-center justify-center rounded-t-[6px] border border-[#b3b2ad] bg-[#f0efed]"><svg width="6" height="4" viewBox="0 0 6 4"><path d="M3 0l3 4H0z" fill="#8b8984" /></svg></div>
        <div className="flex h-[741px] items-center justify-center rounded-full border border-[#9b9a95] bg-linear-to-r from-[#fafafa] to-[#e8e7e5]">
          <svg width="6" height="10" viewBox="0 0 6 10"><path d="M0 1h6M0 5h6M0 9h6" stroke="#b3b2ad" /></svg>
        </div>
        <div className="mt-auto flex h-[14px] items-center justify-center rounded-b-[6px] border border-[#b3b2ad] bg-[#f0efed]"><svg width="6" height="4" viewBox="0 0 6 4"><path d="M0 0h6L3 4z" fill="#8b8984" /></svg></div>
      </div>
    </div>
  );
}

/* ---------- find bar ---------- */

function FindBar() {
  return (
    <footer className="flex h-[35px] shrink-0 items-center border-t border-[#9b9a95] bg-[#f1f0ee] pt-px text-[14.5px] leading-6 text-[#4c4c4c]">
      <CloseGlyph className="ml-[7px]" />
      <Fit w={70} className="ml-3.5">Encontrar:</Fit>
      <div className="mb-px ml-2.5 flex h-[26px] w-[238px] items-center rounded-[4px] border border-[#a9a8a3] bg-white pl-1.5 text-[#333]">
        <Fit w={96}>select_related</Fit>
      </div>
      <svg className="ml-4" width="5" height="8" viewBox="0 0 5 8"><path d="M5 0v8L0 4z" fill="#6e6d68" /></svg>
      <Fit w={56} className="ml-[7px]"><u className="underline-offset-2">A</u>nterior</Fit>
      <svg className="ml-[19px]" width="5" height="8" viewBox="0 0 5 8"><path d="M0 0v8l5-4z" fill="#6e6d68" /></svg>
      <Fit w={62} className="ml-[6px]">Siguie<u className="underline-offset-2">n</u>te</Fit>
      <svg className="ml-3" width="16" height="16" viewBox="0 0 16 16"><path d="M3 1h8l4 5v6l-3 3H2l-1-3z" fill="#f5cf1d" stroke="#d8a90c" strokeWidth=".8" /><path d="M3 7l5 4 6-5-4-4z" fill="#fdf0a0" /><path d="M1.500 14L7 10" stroke="#fff7c8" strokeWidth="1.500" /></svg>
      <Fit w={91} className="ml-[2px]"><u className="underline-offset-2">R</u>esaltar todo</Fit>
      <div className="ml-[13px] size-3 rounded-[2px] border border-[#9b9a95] bg-white" />
      <Fit w={265} className="ml-[5px]"><u className="underline-offset-2">C</u>oincidencia de mayúsculas/minúsculas</Fit>
      <svg className="ml-[18px]" width="16" height="16" viewBox="0 0 16 16"><rect x="3.500" y="1.500" width="11" height="13" fill="#f4f6f8" stroke="#777" /><path d="M6 4h7M6 6h7M6 11h7" stroke="#aaa" /><path d="M5 14H1.500V2H8v7" fill="none" stroke="#2e67ad" strokeWidth="2" /><path d="M4.500 8h7L8 12.500z" fill="#3c7cc8" stroke="#1f4d88" strokeWidth=".7" /></svg>
      <Fit w={406} className="ml-[4px]">Se alcanzó el final de la página, se continúa desde el principio</Fit>
    </footer>
  );
}

export default function App() {
  return (
    <div className="flex h-[1200px] w-[1920px] flex-col overflow-hidden bg-white font-['Open_Sans','Noto_Sans',sans-serif]">
      <TopPanel />
      <div className="flex min-h-0 flex-1">
        <Launcher />
        <div className="flex w-[1855px] flex-col">
          <TabStrip />
          <NavBar />
          <Page />
          <FindBar />
        </div>
      </div>
    </div>
  );
}
